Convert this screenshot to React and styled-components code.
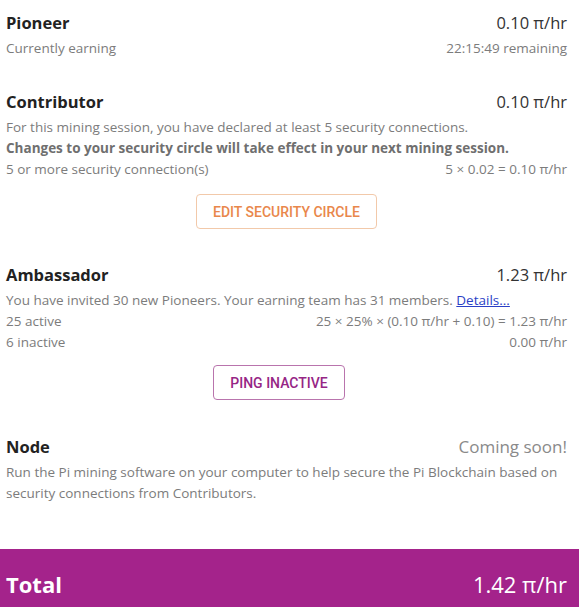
import React from "react";
import styled, { createGlobalStyle } from "styled-components";

const Global = createGlobalStyle`
  html, body { margin: 0; padding: 0; background: #fff; overflow: hidden; }
  body { font-family: "Open Sans", "Noto Sans", sans-serif; }
`;

const Page = styled.div`
  display: flex;
  flex-direction: column;
  min-height: 607px;
`;

const Content = styled.div`
  padding: 11px 12px 0 6px;
  display: flex;
  flex-direction: column;
`;

const Section = styled.section`
  display: flex;
  flex-direction: column;
  margin-top: ${(p) => p.$gap || 0}px;
`;

const Row = styled.div`
  display: flex;
  justify-content: space-between;
  align-items: baseline;
  gap: 12px;
  margin-bottom: 3px;
`;

const Title = styled.h2`
  margin: 0;
  font-size: 16.5px;
  font-weight: 700;
  line-height: 24px;
  color: #222;
`;

const Rate = styled.span`
  font-size: ${(p) => (p.$muted ? 17 : 16.5)}px;
  line-height: 24px;
  color: ${(p) => (p.$muted ? "#8a8a8a" : "#333")};
`;

const Line = styled.div`
  display: flex;
  justify-content: space-between;
  font-size: 13.5px;
  line-height: 21px;
  color: #7c7c7c;
  font-weight: ${(p) => (p.$bold ? 700 : 400)};
  ${(p) => p.$bold && "color: #6f6f6f;"}
`;

const Link = styled.a`
  color: #2b3fc6;
  text-decoration: underline;
`;

const ButtonWrap = styled.div`
  display: flex;
  justify-content: center;
  margin-top: ${(p) => p.$gap}px;
  padding-right: ${(p) => p.$shift || 0}px;
`;

const Button = styled.button`
  font-family: Roboto, "Noto Sans", sans-serif;
  font-weight: 500;
  font-size: 14px;
  text-transform: uppercase;
  background: #fff;
  height: 35px;
  padding: 0 16px;
  border-radius: 4px;
  border: 1px solid ${(p) => p.$border};
  color: ${(p) => p.$color};
  cursor: pointer;
`;

const TotalBar = styled.div`
  margin-top: auto;
  background: #a4238b;
  color: #fff;
  display: flex;
  justify-content: space-between;
  align-items: baseline;
  padding: 20px 12px 8px 6px;
`;

const TotalLabel = styled.span`
  font-size: 22px;
  font-weight: 700;
  line-height: 30px;
`;

const TotalValue = styled.span`
  font-size: 22px;
  line-height: 30px;
`;

export default function App() {
  return (
    <Page>
      <Global />
      <Content>
        <Section>
          <Row>
            <Title>Pioneer</Title>
            <Rate>0.10 π/hr</Rate>
          </Row>
          <Line>
            <span>Currently earning</span>
            <span>22:15:49 remaining</span>
          </Line>
        </Section>

        <Section $gap={31}>
          <Row>
            <Title>Contributor</Title>
            <Rate>0.10 π/hr</Rate>
          </Row>
          <Line>For this mining session, you have declared at least 5 security connections.</Line>
          <Line $bold>Changes to your security circle will take effect in your next mining session.</Line>
          <Line>
            <span>5 or more security connection(s)</span>
            <span>5 × 0.02 = 0.10 π/hr</span>
          </Line>
        </Section>
        <ButtonWrap $gap={14}>
          <Button $border="#f2c9aa" $color="#e9874b">Edit Security Circle</Button>
        </ButtonWrap>

        <Section $gap={34}>
          <Row>
            <Title>Ambassador</Title>
            <Rate>1.23 π/hr</Rate>
          </Row>
          <Line>
            <span>
              You have invited 30 new Pioneers. Your earning team has 31 members.{" "}
              <Link href="#">Details...</Link>
            </span>
          </Line>
          <Line>
            <span>25 active</span>
            <span>25 × 25% × (0.10 π/hr + 0.10) = 1.23 π/hr</span>
          </Line>
          <Line>
            <span>6 inactive</span>
            <span>0.00 π/hr</span>
          </Line>
        </Section>
        <ButtonWrap $gap={12} $shift={15}>
          <Button $border="#b974ad" $color="#962685">Ping Inactive</Button>
        </ButtonWrap>

        <Section $gap={35}>
          <Row>
            <Title>Node</Title>
            <Rate $muted>Coming soon!</Rate>
          </Row>
          <Line>
            Run the Pi mining software on your computer to help secure the Pi Blockchain based on security connections from Contributors.
          </Line>
        </Section>
      </Content>
      <TotalBar>
        <TotalLabel>Total</TotalLabel>
        <TotalValue>1.42 π/hr</TotalValue>
      </TotalBar>
    </Page>
  );
}
